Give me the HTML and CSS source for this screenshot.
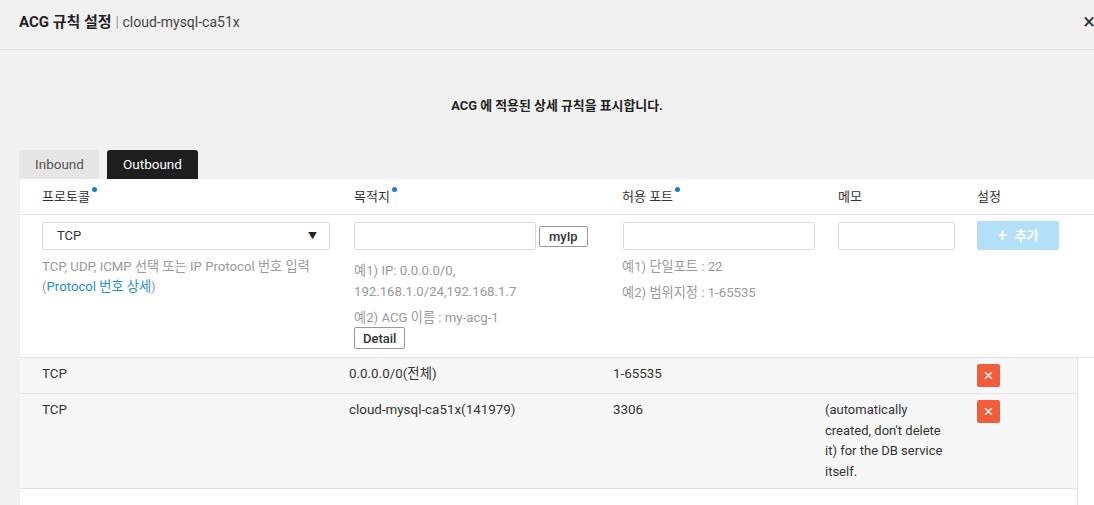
FILE: index.html
```html
<!DOCTYPE html>
<html lang="ko">
<head>
  <meta charset="UTF-8">
  <title>ACG 규칙 설정</title>
  <link rel="stylesheet" href="styles.css">
</head>
<body>
  <div class="modal">
    <div class="modal-header">
      <h1 class="modal-title">ACG 규칙 설정 <span class="sep">|</span> <span class="sub">cloud-mysql-ca51x</span></h1>
      <span class="close">&times;</span>
    </div>

    <p class="desc">ACG 에 적용된 상세 규칙을 표시합니다.</p>

    <div class="tabs">
      <span class="tab">Inbound</span>
      <span class="tab active">Outbound</span>
    </div>

    <div class="card">
      <div class="head-row">
        <div class="cell">프로토콜<i class="dot"></i></div>
        <div class="cell">목적지<i class="dot"></i></div>
        <div class="cell">허용 포트<i class="dot"></i></div>
        <div class="cell">메모</div>
        <div class="cell">설정</div>
      </div>

      <div class="form-row">
        <div class="cell">
          <div class="select">TCP <span class="caret">&#9660;</span></div>
          <p class="hint first">TCP, UDP, ICMP 선택 또는 IP Protocol 번호 입력<br>(<a class="link">Protocol 번호 상세</a>)</p>
        </div>
        <div class="cell">
          <div class="dest">
            <input class="input dest-input" type="text">
            <button class="small-btn">myIp</button>
          </div>
          <p class="hint dest-hint">예1) IP: 0.0.0.0/0,<br>192.168.1.0/24,192.168.1.7</p>
          <p class="hint next">예2) ACG 이름 : my-acg-1</p>
          <button class="small-btn detail">Detail</button>
        </div>
        <div class="cell">
          <input class="input port-input" type="text">
          <p class="hint first">예1) 단일포트 : 22</p>
          <p class="hint next">예2) 범위지정 : 1-65535</p>
        </div>
        <div class="cell">
          <input class="input memo-input" type="text">
        </div>
        <div class="cell">
          <button class="add-btn"><span class="plus">+</span> 추가</button>
        </div>
      </div>

      <div class="rules">
        <div class="rule">
          <div class="cell">TCP</div>
          <div class="cell">0.0.0.0/0(전체)</div>
          <div class="cell">1-65535</div>
          <div class="cell"></div>
          <div class="cell"><button class="del-btn">&times;</button></div>
        </div>
        <div class="rule">
          <div class="cell">TCP</div>
          <div class="cell">cloud-mysql-ca51x(141979)</div>
          <div class="cell">3306</div>
          <div class="cell memo">(automatically created, don't delete it) for the DB service itself.</div>
          <div class="cell"><button class="del-btn">&times;</button></div>
        </div>
      </div>
    </div>
  </div>
</body>
</html>
```

FILE: styles.css
```css
html, body {
  margin: 0;
  height: 100%;
  overflow: hidden;
}
body {
  font-family: Roboto, "Noto Sans CJK KR", sans-serif;
  background-color: #f1f1f1;
  color: #333;
  font-size: 13px;
}
.modal {
  width: 1116px;
}
.modal-header {
  height: 50px;
  border-bottom: 1px solid #e2e2e2;
  display: flex;
  justify-content: space-between;
  padding: 11px 25px 0 19px;
  box-sizing: border-box;
}
.modal-title {
  margin: 0;
  font-size: 15px;
  font-weight: bold;
  color: #222;
  line-height: 22px;
}
.modal-title .sep {
  font-weight: normal;
  color: #999;
  font-size: 14px;
}
.modal-title .sub {
  font-weight: normal;
  color: #444;
  font-size: 14px;
}
.close {
  font-size: 22px;
  line-height: 22px;
  color: #333;
  margin-right: -4px;
}
.desc {
  margin: 47px 0 0 0;
  width: 1114px;
  text-align: center;
  font-weight: bold;
  font-size: 12.9px;
  line-height: 18px;
  color: #222;
}
.tabs {
  display: flex;
  gap: 8px;
  margin: 35px 0 0 19px;
}
.tab {
  display: block;
  height: 29px;
  line-height: 29px;
  padding: 0 16px;
  background: #e6e6e6;
  color: #555;
  font-size: 13.5px;
  border-radius: 3px 3px 0 0;
}
.tabs .tab:first-child {
  width: 48px;
}
.tab.active {
  background: #1e1e1e;
  color: #fff;
  width: 59px;
}
.card {
  margin-left: 20px;
  background: #fff;
  height: 400px;
}
.head-row, .form-row {
  display: grid;
  grid-template-columns: 312px 268px 216px 139px 1fr;
  border-bottom: 1px solid #e3e3e3;
}
.head-row .cell {
  height: 35px;
  line-height: 36px;
  padding-left: 22px;
  font-size: 13px;
  color: #333;
}
.dot {
  display: inline-block;
  width: 5px;
  height: 5px;
  border-radius: 50%;
  background: #1a7bd1;
  vertical-align: 9px;
  margin-left: 2px;
}
.form-row {
  height: 142px;
}
.form-row .cell {
  padding: 7px 0 0 22px;
}
.select {
  height: 26px;
  border: 1px solid #dcdcdc;
  border-radius: 2px;
  line-height: 26px;
  padding-left: 14px;
  width: 272px;
  position: relative;
  color: #333;
}
.caret {
  position: absolute;
  right: 12px;
  top: 0;
  font-size: 9px;
  color: #222;
}
.input {
  display: block;
  height: 28px;
  border: 1px solid #dcdcdc;
  border-radius: 2px;
  box-sizing: border-box;
  margin: 0;
}
.dest {
  display: flex;
  align-items: center;
  gap: 3px;
}
.dest-input {
  width: 182px;
}
.port-input {
  width: 192px;
  margin-left: 1px;
}
.memo-input {
  width: 117px;
}
.small-btn {
  height: 21px;
  padding: 0 9px;
  border: 1px solid #999;
  border-radius: 2px;
  background: #fff;
  color: #333;
  font-family: inherit;
  font-size: 13px;
  font-weight: 500;
  line-height: 19px;
}
.detail {
  display: block;
  margin-top: -1px;
  height: 22px;
  padding: 0 8px;
}
.hint {
  margin: 0;
  color: #9a9a9a;
  font-size: 13.2px;
  line-height: 20px;
}
.hint.first {
  margin-top: 7px;
}
.hint.next {
  margin-top: 6px;
}
.dest-hint {
  margin-top: 10px;
  line-height: 21px;
}
.link {
  color: #1d8fd6;
}
.add-btn {
  width: 82px;
  height: 29px;
  margin-top: -1px;
  border: none;
  border-radius: 2px;
  background: #b4dff8;
  color: #fff;
  font-family: inherit;
  font-size: 13px;
  font-weight: bold;
}
.plus {
  font-size: 18px;
  font-weight: normal;
  vertical-align: -2px;
  margin-right: 4px;
}
.rules {
  width: 1058px;
  border-right: 1px solid #e3e3e3;
  box-sizing: border-box;
  height: 160px;
}
.rule {
  display: grid;
  grid-template-columns: 307px 264px 212px 152px 1fr;
  background: #f7f7f7;
  border-bottom: 1px solid #e3e3e3;
}
.rule .cell {
  padding: 6px 6px 6px 22px;
  line-height: 20px;
  color: #333;
  font-size: 13.4px;
}
.rule .memo {
  padding-right: 0;
  font-size: 13px;
  line-height: 20.5px;
}
.del-btn {
  display: block;
  width: 23px;
  height: 23px;
  border: none;
  border-radius: 2px;
  background: #f15d3a;
  color: #fff;
  font-size: 17px;
  line-height: 23px;
  padding: 0;
}
```
